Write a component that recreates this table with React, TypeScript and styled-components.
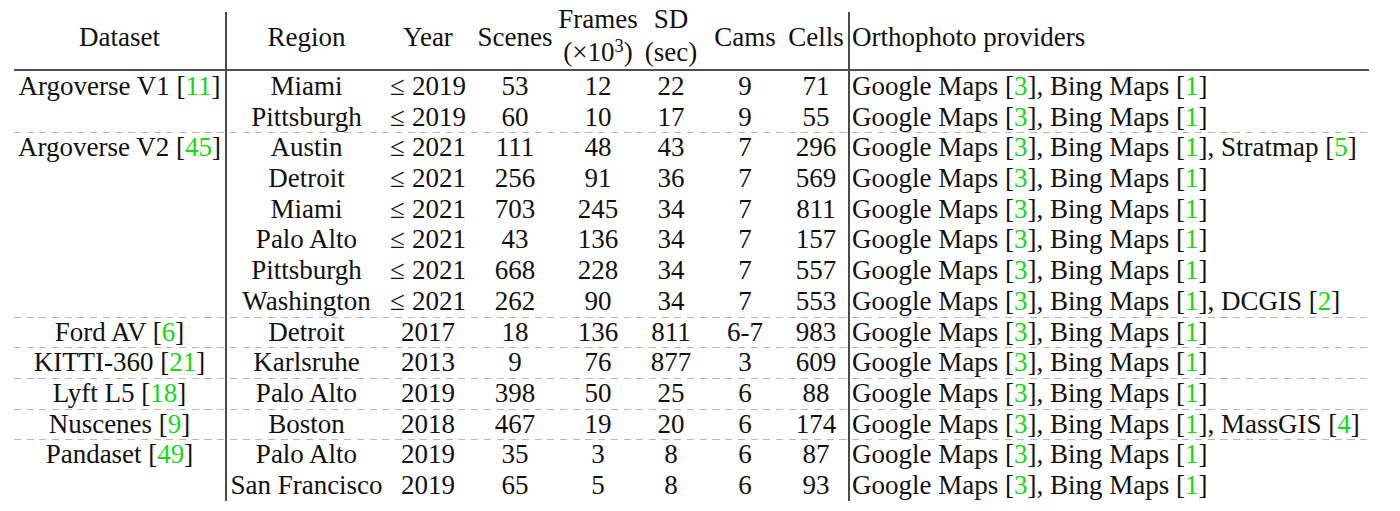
import React from "react";
import styled, { createGlobalStyle } from "styled-components";

const Global = createGlobalStyle`
  html, body { margin: 0; padding: 0; background: #ffffff; }
  body { font-family: "Liberation Serif", "Times New Roman", serif; color: #111; }
`;

const COLS = "211px 161px 84px 90px 76px 70px 78px 64px 521px";

const Page = styled.div`
  padding: 12px 0 0 14px;
  width: 1355px;
`;

const Table = styled.div`
  display: flex;
  flex-direction: column;
  font-family: "Liberation Serif", "Times New Roman", serif;
  font-size: 27px;
  color: #111;
`;

const HeaderRow = styled.div`
  display: grid;
  grid-template-columns: ${COLS};
  grid-template-rows: 57px;
  height: 57px;
  border-bottom: 2px solid #505050;
`;

const HeadCell = styled.div<{ $align?: "left" | "center"; $rule?: boolean; $two?: boolean }>`
  box-sizing: border-box;
  height: 57px;
  display: flex;
  flex-direction: column;
  justify-content: flex-end;
  gap: ${(p) => (p.$two ? "6px" : "0")};
  align-items: ${(p) => (p.$align === "left" ? "flex-start" : "center")};
  padding-left: ${(p) => (p.$align === "left" ? "2px" : "0")};
  padding-bottom: ${(p) => (p.$two ? "2.6px" : "6px")};
  line-height: ${(p) => (p.$two ? "27px" : "30.7px")};
  white-space: nowrap;
  border-left: ${(p) => (p.$rule ? "2px solid #4a4a4a" : "none")};
  ${(p) => (p.$two ? "" : "padding-bottom: 16px;")}
`;

const Row = styled.div<{ $dashed?: boolean }>`
  display: grid;
  grid-template-columns: ${COLS};
  grid-template-rows: 30.7px;
  height: 30.7px;
  line-height: 30.7px;
  background-image: ${(p) =>
    p.$dashed
      ? "repeating-linear-gradient(to right, #b8b8b8 0px, #b8b8b8 7px, transparent 7px, transparent 12.7px)"
      : "none"};
  background-size: 100% 1px;
  background-repeat: no-repeat;
  background-position: 0 0;
`;

const Cell = styled.div<{ $align?: "left" | "center"; $rule?: boolean }>`
  box-sizing: border-box;
  text-align: ${(p) => p.$align ?? "center"};
  padding-left: ${(p) => (p.$align === "left" ? "2px" : "0")};
  white-space: nowrap;
  border-left: ${(p) => (p.$rule ? "2px solid #4a4a4a" : "none")};
`;

const Cite = styled.span`
  color: #14d814;
`;

const Sup = styled.span`
  font-size: 0.68em;
  position: relative;
  top: -0.5em;
  line-height: 0;
`;

const Leq = styled.span`
  margin-right: 7px;
`;

type Provider = { name: string; ref: string };

type RowData = {
  dataset?: { name: string; ref: string };
  region: string;
  year: string;
  leq?: boolean;
  scenes: string;
  frames: string;
  sd: string;
  cams: string;
  cells: string;
  extra?: Provider;
  dashed?: boolean;
};

const rows: RowData[] = [
  { dataset: { name: "Argoverse V1", ref: "11" }, region: "Miami", year: "2019", leq: true, scenes: "53", frames: "12", sd: "22", cams: "9", cells: "71" },
  { region: "Pittsburgh", year: "2019", leq: true, scenes: "60", frames: "10", sd: "17", cams: "9", cells: "55" },
  { dataset: { name: "Argoverse V2", ref: "45" }, region: "Austin", year: "2021", leq: true, scenes: "111", frames: "48", sd: "43", cams: "7", cells: "296", extra: { name: "Stratmap", ref: "5" }, dashed: true },
  { region: "Detroit", year: "2021", leq: true, scenes: "256", frames: "91", sd: "36", cams: "7", cells: "569" },
  { region: "Miami", year: "2021", leq: true, scenes: "703", frames: "245", sd: "34", cams: "7", cells: "811" },
  { region: "Palo Alto", year: "2021", leq: true, scenes: "43", frames: "136", sd: "34", cams: "7", cells: "157" },
  { region: "Pittsburgh", year: "2021", leq: true, scenes: "668", frames: "228", sd: "34", cams: "7", cells: "557" },
  { region: "Washington", year: "2021", leq: true, scenes: "262", frames: "90", sd: "34", cams: "7", cells: "553", extra: { name: "DCGIS", ref: "2" } },
  { dataset: { name: "Ford AV", ref: "6" }, region: "Detroit", year: "2017", scenes: "18", frames: "136", sd: "811", cams: "6-7", cells: "983", dashed: true },
  { dataset: { name: "KITTI-360", ref: "21" }, region: "Karlsruhe", year: "2013", scenes: "9", frames: "76", sd: "877", cams: "3", cells: "609", dashed: true },
  { dataset: { name: "Lyft L5", ref: "18" }, region: "Palo Alto", year: "2019", scenes: "398", frames: "50", sd: "25", cams: "6", cells: "88", dashed: true },
  { dataset: { name: "Nuscenes", ref: "9" }, region: "Boston", year: "2018", scenes: "467", frames: "19", sd: "20", cams: "6", cells: "174", extra: { name: "MassGIS", ref: "4" }, dashed: true },
  { dataset: { name: "Pandaset", ref: "49" }, region: "Palo Alto", year: "2019", scenes: "35", frames: "3", sd: "8", cams: "6", cells: "87", dashed: true },
  { region: "San Francisco", year: "2019", scenes: "65", frames: "5", sd: "8", cams: "6", cells: "93" },
];

const Ref: React.FC<{ n: string }> = ({ n }) => (
  <>
    [<Cite>{n}</Cite>]
  </>
);

export default function App() {
  return (
    <>
      <Global />
      <Page>
        <Table>
          <HeaderRow>
            <HeadCell>Dataset</HeadCell>
            <HeadCell $rule>Region</HeadCell>
            <HeadCell>Year</HeadCell>
            <HeadCell>Scenes</HeadCell>
            <HeadCell $two>
              <span>Frames</span>
              <span>
                (×10<Sup>3</Sup>)
              </span>
            </HeadCell>
            <HeadCell $two>
              <span>SD</span>
              <span>(sec)</span>
            </HeadCell>
            <HeadCell>Cams</HeadCell>
            <HeadCell>Cells</HeadCell>
            <HeadCell $rule $align="left">
              Orthophoto providers
            </HeadCell>
          </HeaderRow>
          {rows.map((r, i) => (
            <Row key={i} $dashed={r.dashed}>
              <Cell>
                {r.dataset ? (
                  <>
                    {r.dataset.name} <Ref n={r.dataset.ref} />
                  </>
                ) : null}
              </Cell>
              <Cell $rule>{r.region}</Cell>
              <Cell>
                {r.leq ? <Leq>≤</Leq> : null}
                {r.year}
              </Cell>
              <Cell>{r.scenes}</Cell>
              <Cell>{r.frames}</Cell>
              <Cell>{r.sd}</Cell>
              <Cell>{r.cams}</Cell>
              <Cell>{r.cells}</Cell>
              <Cell $rule $align="left">
                Google Maps <Ref n="3" />, Bing Maps <Ref n="1" />
                {r.extra ? (
                  <>
                    , {r.extra.name} <Ref n={r.extra.ref} />
                  </>
                ) : null}
              </Cell>
            </Row>
          ))}
        </Table>
      </Page>
    </>
  );
}
